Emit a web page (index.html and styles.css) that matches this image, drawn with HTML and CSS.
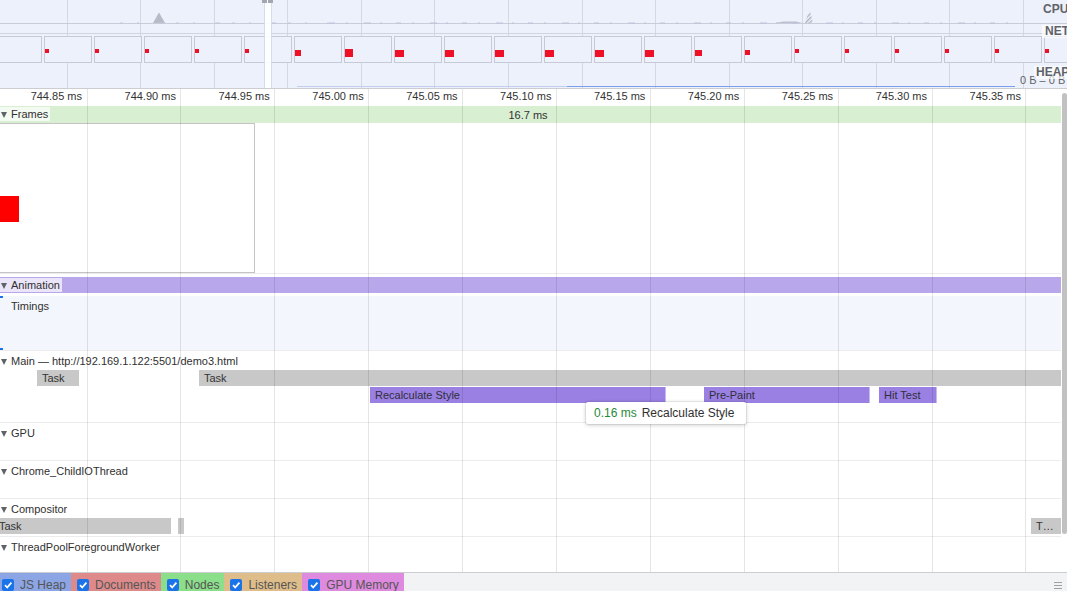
FILE: index.html
```html
<!DOCTYPE html>
<html>
<head>
<meta charset="utf-8">
<link rel="stylesheet" href="styles.css">
</head>
<body>
<div class="app">
  <div class="overview">
    <div class="ov-grid"><i></i><i></i><i></i><i></i><i></i><i></i><i></i><i></i><i></i><i></i><i></i><i></i><i></i><i></i></div>
    <div class="ov-cpu">
      <svg class="cpu-chart" width="1067" height="24" viewBox="0 0 1067 24">
        <defs>
          <pattern id="hatch" width="3" height="3" patternUnits="userSpaceOnUse" patternTransform="rotate(45)">
            <rect width="1.4" height="3" fill="#aeb3c0"/>
          </pattern>
        </defs>
        <line x1="0" y1="23.5" x2="1067" y2="23.5" stroke="#c9cdd9" stroke-width="1"/>
        <polygon points="153,23 157,16 159,12.5 161,16 165,23" fill="#b7bbc7"/>
        <polygon points="805,23 808,14 810,11 813,23" fill="url(#hatch)"/>
        <polygon points="775,23 783,21.5 796,21.5 802,23" fill="#bcc0d2"/>
        <polyline points="120,23 330,23" stroke="#c2c4de" stroke-width="1" stroke-dasharray="3 14 2 20 5 12"/>
        <polyline points="330,23 1010,23" stroke="#bfc1dc" stroke-width="1" stroke-dasharray="5 11 2 16 7 9 2 14"/>
      </svg>
    </div>
    <div class="ov-net">
      <div class="film">
        <div class="thumb"></div>
        <div class="thumb"><span class="dot s"></span></div>
        <div class="thumb"><span class="dot s"></span></div>
        <div class="thumb"><span class="dot s"></span></div>
        <div class="thumb"><span class="dot s"></span></div>
        <div class="thumb"><span class="dot s"></span></div>
        <div class="thumb"><span class="dot m"></span></div>
        <div class="thumb"><span class="dot l"></span></div>
        <div class="thumb"><span class="dot xl"></span></div>
        <div class="thumb"><span class="dot xl"></span></div>
        <div class="thumb"><span class="dot xl"></span></div>
        <div class="thumb"><span class="dot xl"></span></div>
        <div class="thumb"><span class="dot xl"></span></div>
        <div class="thumb"><span class="dot xl"></span></div>
        <div class="thumb"><span class="dot m7"></span></div>
        <div class="thumb"><span class="dot s5"></span></div>
        <div class="thumb"><span class="dot s"></span></div>
        <div class="thumb"><span class="dot s"></span></div>
        <div class="thumb"><span class="dot s"></span></div>
        <div class="thumb"><span class="dot s"></span></div>
        <div class="thumb"><span class="dot s"></span></div>
        <div class="thumb"><span class="dot s"></span></div>
      </div>
    </div>
    <div class="ov-heap">
      <span class="heap-faint"></span><span class="heap-blue"></span>
    </div>
    <div class="ov-window"><i class="h1"></i><i class="h2"></i></div>
    <span class="ov-range">0 B – 0 B</span>
    <span class="ov-label cpu">CPU</span>
    <span class="ov-label net">NET</span>
    <span class="ov-label heap">HEAP</span>
  </div>

  <div class="timeline">
    <div class="ruler">
      <span>744.85 ms</span><span>744.90 ms</span><span>744.95 ms</span><span>745.00 ms</span><span>745.05 ms</span><span>745.10 ms</span><span>745.15 ms</span><span>745.20 ms</span><span>745.25 ms</span><span>745.30 ms</span><span>745.35 ms</span>
    </div>
    <div class="tracks">
      <div class="frames-band">
        <span class="tlabel"><b class="tri"></b>Frames</span>
        <span class="fps">16.7 ms</span>
      </div>
      <div class="shots">
        <div class="shot"><div class="shot-red"></div></div>
      </div>
      <div class="anim">
        <div class="anim-band"><span class="tlabel"><b class="tri"></b>Animation</span></div>
        <div class="timings">Timings</div>
      </div>
      <div class="track main">
        <div class="track-title"><b class="tri"></b>Main — http://192.169.1.122:5501/demo3.html</div>
        <div class="lane">
          <div class="bar task" style="left:37px;width:42px">Task</div>
          <div class="bar task" style="left:199px;width:862px">Task</div>
        </div>
        <div class="lane">
          <div class="bar render" style="left:370px;width:296px">Recalculate Style</div>
          <div class="bar render" style="left:704px;width:166px">Pre-Paint</div>
          <div class="bar render" style="left:879px;width:58px">Hit Test</div>
        </div>
        <div class="tooltip"><span class="tt-time">0.16 ms</span><span class="tt-name">Recalculate Style</span></div>
      </div>
      <div class="track">
        <div class="track-title"><b class="tri"></b>GPU</div>
      </div>
      <div class="track">
        <div class="track-title"><b class="tri"></b>Chrome_ChildIOThread</div>
      </div>
      <div class="track">
        <div class="track-title"><b class="tri"></b>Compositor</div>
        <div class="lane">
          <div class="bar task" style="left:-6px;width:177px">Task</div>
          <div class="bar task" style="left:178px;width:6px"></div>
          <div class="bar task" style="left:1031px;width:30px">T…</div>
        </div>
      </div>
      <div class="track last">
        <div class="track-title"><b class="tri"></b>ThreadPoolForegroundWorker</div>
      </div>
    </div>
    <div class="grid"><i></i><i></i><i></i><i></i><i></i><i></i><i></i><i></i><i></i><i></i><i></i></div>
    <div class="scrollbar"></div>
  </div>

  <div class="bottombar">
    <label class="cb-item heapc first"><span class="cb"><svg width="10" height="10" viewBox="0 0 10 10"><path d="M2 5.2 L4.2 7.5 L8.4 2.6" fill="none" stroke="#fff" stroke-width="1.8"/></svg></span>JS Heap</label>
    <label class="cb-item docs"><span class="cb"><svg width="10" height="10" viewBox="0 0 10 10"><path d="M2 5.2 L4.2 7.5 L8.4 2.6" fill="none" stroke="#fff" stroke-width="1.8"/></svg></span>Documents</label>
    <label class="cb-item nodes"><span class="cb"><svg width="10" height="10" viewBox="0 0 10 10"><path d="M2 5.2 L4.2 7.5 L8.4 2.6" fill="none" stroke="#fff" stroke-width="1.8"/></svg></span>Nodes</label>
    <label class="cb-item listeners"><span class="cb"><svg width="10" height="10" viewBox="0 0 10 10"><path d="M2 5.2 L4.2 7.5 L8.4 2.6" fill="none" stroke="#fff" stroke-width="1.8"/></svg></span>Listeners</label>
    <label class="cb-item gpu"><span class="cb"><svg width="10" height="10" viewBox="0 0 10 10"><path d="M2 5.2 L4.2 7.5 L8.4 2.6" fill="none" stroke="#fff" stroke-width="1.8"/></svg></span>GPU Memory</label>
    <span class="menu"></span>
  </div>
</div>
</body>
</html>
```

FILE: styles.css
```css
* { box-sizing: border-box; margin: 0; padding: 0; }
html, body { width: 1067px; height: 591px; overflow: hidden; background: #fff; }
body { font-family: "Liberation Sans", Arial, Helvetica, sans-serif; font-size: 11px; color: #303030; }
.app { display: flex; flex-direction: column; width: 1067px; height: 591px; }

/* ---------- overview ---------- */
.overview { position: relative; flex: none; height: 89px; background: #edf1fb; border-bottom: 1px solid #cbcdd1; overflow: hidden; }
.ov-grid { position: absolute; top: 0; left: 0; right: 0; bottom: 0; display: flex; padding-left: 66.5px; z-index: 0; overflow: hidden; }
.ov-grid i { flex: 0 0 73.58px; border-left: 1px solid #d3d8e4; }
.ov-cpu { position: relative; z-index: 1; height: 34px; border-bottom: 1px solid #cfd4df; }
.cpu-chart { display: block; }
.ov-net { position: relative; z-index: 1; padding-top: 2px; height: 29px; }
.film { display: flex; gap: 2px; margin-left: -6px; height: 27px; }
.thumb { flex: 0 0 48px; height: 27px; border: 1px solid #c5cad6; background: #edf1fb; }
.dot { display: block; background: #ee1026; }
.dot.s { width: 4px; height: 4px; margin-top: 12px; }
.dot.s5 { width: 5px; height: 5px; margin-top: 13px; }
.dot.m { width: 6px; height: 6px; margin-top: 13px; }
.dot.m7 { width: 7px; height: 6px; margin-top: 13px; }
.dot.l { width: 8px; height: 8px; margin-top: 12px; }
.dot.xl { width: 9px; height: 7px; margin-top: 13px; }
.ov-heap { position: relative; z-index: 1; height: 25px; display: flex; align-items: flex-end; padding-left: 297px; padding-bottom: 1px; }
.heap-faint { width: 270px; height: 1px; background: #c3cdec; }
.heap-blue { width: 448px; height: 1px; background: #79a0e8; }
.ov-window { position: absolute; z-index: 3; left: 264px; top: 0; width: 8px; height: 88px; background: rgba(255,255,255,0.88); border-left: 1px solid rgba(170,180,205,0.45); border-right: 1px solid rgba(170,180,205,0.45); }
.ov-window i { position: absolute; top: 0; height: 3px; background: #a2a7b0; }
.ov-window .h1 { left: -3px; width: 5px; }
.ov-window .h2 { left: 3px; width: 5px; }
.ov-range { position: absolute; z-index: 2; left: 1020px; top: 74px; font-size: 11px; line-height: 13px; color: #5f6368; white-space: nowrap; }
.ov-label { position: absolute; z-index: 2; font-weight: bold; font-size: 12px; line-height: 13px; color: #5f6368; white-space: nowrap; }
.ov-label.cpu { left: 1043px; top: 3px; }
.ov-label.net { left: 1042px; top: 25px; padding-left: 3px; background: rgba(255,255,255,0.65); }
.ov-label.heap { left: 1034px; top: 66px; padding-left: 2px; background: rgba(255,255,255,0.65); }

/* ---------- timeline ---------- */
.timeline { position: relative; flex: none; height: 483px; }
.ruler { display: flex; height: 17px; line-height: 15px; white-space: nowrap; color: #333; }
.ruler span { flex: 0 0 93.9px; text-align: right; padding-right: 4.5px; }
.ruler span:first-child { flex-basis: 86.5px; }
.tracks { width: 1061px; }

.tlabel { position: absolute; left: 0; top: 1px; height: 14px; line-height: 14px; padding-right: 2px; background: rgba(255,255,255,0.7); white-space: nowrap; }
.tri { display: inline-block; width: 0; height: 0; border-left: 3.5px solid transparent; border-right: 3.5px solid transparent; border-top: 6px solid #5f6368; margin: 0 4px 0 1px; vertical-align: middle; }

.frames-band { position: relative; height: 17px; background: #d8efd2; display: flex; justify-content: center; align-items: center; padding-right: 5px; }
.fps { color: #333; }
.shots { height: 151px; border-bottom: 1px solid #ececec; }
.shot { width: 256px; height: 150px; margin-left: -1px; border: 1px solid #c4c4c4; background: #fff; }
.shot-red { width: 19px; height: 26px; margin-top: 72px; background: #ff0000; }

.anim { padding-top: 3px; border-bottom: 1px solid #ececec; }
.anim-band { position: relative; height: 16px; background: #b9a7ec; }
.anim-band .tlabel { top: 1px; height: 14px; }
.timings { position: relative; margin-top: 3px; height: 54px; background: #f3f7fd; padding: 3px 0 0 11px; line-height: 14px; }
.timings::before, .timings::after { content: ""; position: absolute; left: 0; width: 3px; height: 2px; background: #1a73e8; }
.timings::before { top: 0; }
.timings::after { bottom: 0; }

.track { position: relative; height: 38px; border-bottom: 1px solid #ececec; }
.track.main { height: 72px; }
.track.last { height: 35px; border-bottom: none; }
.track-title { height: 19px; padding-top: 3px; line-height: 14px; white-space: nowrap; }
.lane { position: relative; height: 16px; margin-bottom: 1px; }
.bar { position: absolute; top: 0; height: 16px; line-height: 16px; padding-left: 5px; overflow: hidden; white-space: nowrap; color: #333; }
.bar.task { background: #c8c8c8; }
.bar.render { background: #9a80e3; box-shadow: inset -1px 0 0 rgba(255,255,255,0.45); color: #2f2f3a; }

.tooltip { position: absolute; z-index: 5; left: 586px; top: 51px; height: 22px; line-height: 22px; padding: 0 12px 0 8px; background: #fff; font-size: 12px; white-space: nowrap; color: #303030; box-shadow: 0 0 0 1px rgba(0,0,0,0.06), 0 1px 4px rgba(0,0,0,0.22); border-radius: 2px; }
.tt-time { color: #1e8a3a; margin-right: 5px; }

.grid { position: absolute; top: 0; left: 0; right: 0; bottom: 0; display: flex; padding-left: 86.5px; pointer-events: none; z-index: 2; overflow: hidden; }
.grid i { flex: 0 0 93.9px; border-left: 1px solid rgba(0,0,0,0.1); }
.scrollbar { position: absolute; z-index: 3; left: 1062px; top: 4px; width: 5px; height: 441px; background: #c1c1c1; border-radius: 3px; }

/* ---------- bottom bar ---------- */
.bottombar { flex: none; height: 19px; border-top: 1px solid #cbcdd1; background: #f1f3f4; display: flex; overflow: hidden; }
.cb-item { display: flex; align-items: flex-start; gap: 6px; height: 19px; padding: 5px 5px 0 6px; font-size: 12px; line-height: 14px; color: #555; white-space: nowrap; }
.cb-item.first { padding-left: 2px; }
.cb { flex: none; width: 12px; height: 12px; margin-top: 1px; border-radius: 2px; background: #1a73e8; display: flex; align-items: center; justify-content: center; }
.cb svg { display: block; }
.heapc { background: #8ba5e5; }
.docs { background: #de8a8a; }
.nodes { background: #8bde8a; }
.listeners { background: #dfbd8a; }
.gpu { background: #de8ade; }
.menu { position: relative; margin: 9px 5px 0 auto; width: 8px; height: 7px; border-top: 1px solid #a0a0a0; border-bottom: 1px solid #a0a0a0; }
.menu::after { content: ""; position: absolute; left: 0; right: 0; top: 2px; height: 1px; background: #a0a0a0; }
```
